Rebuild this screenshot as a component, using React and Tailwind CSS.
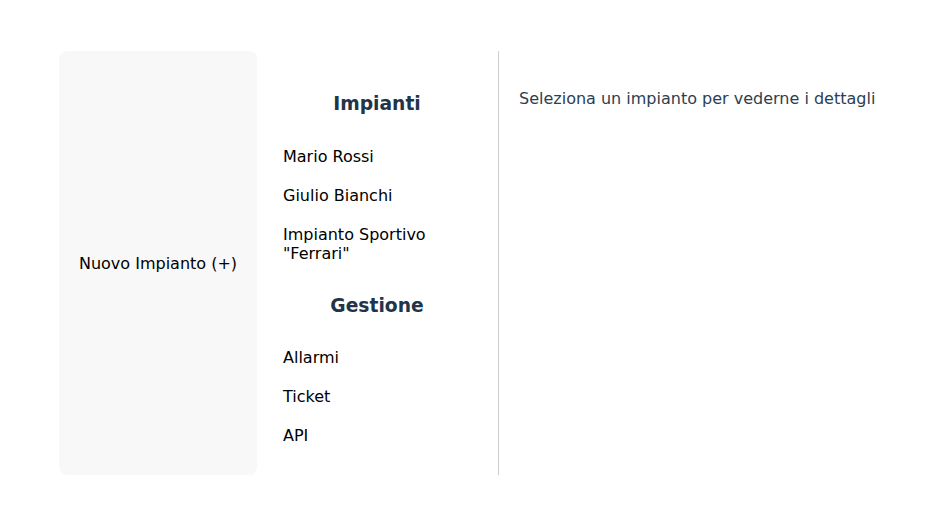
const impianti = ["Mario Rossi", "Giulio Bianchi", 'Impianto Sportivo "Ferrari"'];
const gestione = ["Allarmi", "Ticket", "API"];

const App = () => {
  return (
    <main className="min-h-screen bg-white font-['DejaVu_Sans',sans-serif] leading-normal">
      <div className="flex ml-[59px] pt-[51px]">
        {/* nuovo impianto */}
        <div className="w-[198px] h-[424px] bg-[#f8f8f8] rounded-lg flex items-center justify-center text-black text-base pt-px cursor-pointer">
          Nuovo Impianto (+)
        </div>

        {/* sidebar */}
        <nav className="w-[242px] border-r border-[#cccccc] pl-5 pr-[21px] pt-5 pb-5">
          <h2 className="text-[18.72px] font-bold text-[#22344a] text-center leading-[23px] mt-[21px] mb-[22px]">
            Impianti
          </h2>
          <ul>
            {impianti.map((name) => (
              <li key={name} className="px-1.5 py-2.5 text-black leading-[19px] cursor-pointer">
                {name}
              </li>
            ))}
          </ul>
          <h2 className="text-[18.72px] font-bold text-[#22344a] text-center leading-[23px] mt-[21px] mb-[21px]">
            Gestione
          </h2>
          <ul>
            {gestione.map((name) => (
              <li key={name} className="px-1.5 py-2.5 text-black leading-[19px] cursor-pointer">
                {name}
              </li>
            ))}
          </ul>
        </nav>

        {/* dettagli */}
        <section className="flex-1 pl-5 pt-[38px]">
          <p className="text-[#2c3e50] leading-[19px] whitespace-nowrap">
            Seleziona un impianto per vederne i dettagli
          </p>
        </section>
      </div>
    </main>
  );
};

export default App;
